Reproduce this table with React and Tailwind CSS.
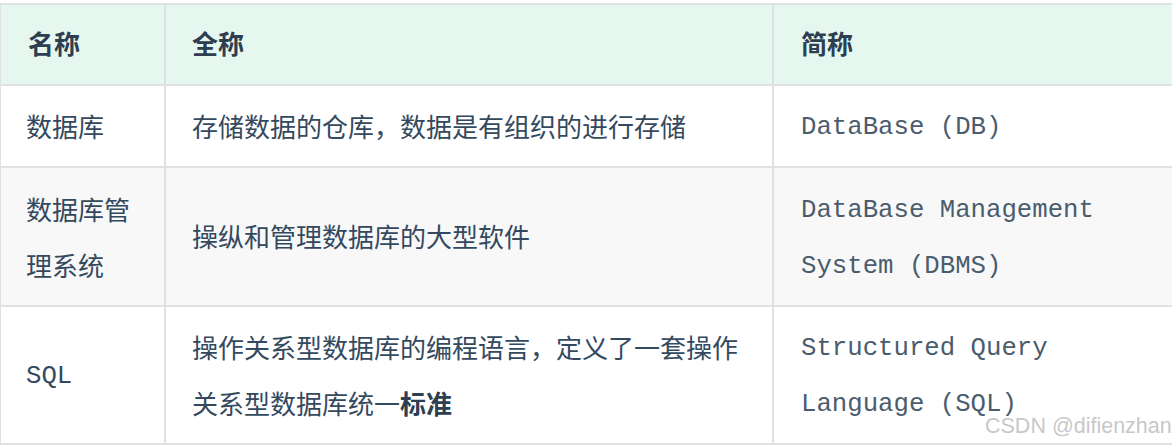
const rows = [
  {
    name: ["数据库"],
    full: [<>存储数据的仓库，数据是有组织的进行存储</>],
    abbr: ["DataBase (DB)"],
    bg: "bg-white",
    h: "h-[80px]",
  },
  {
    name: ["数据库管", "理系统"],
    full: [<>操纵和管理数据库的大型软件</>],
    abbr: ["DataBase Management", "System (DBMS)"],
    bg: "bg-[#f8f8f8]",
    h: "h-[137px]",
  },
  {
    name: ["SQL"],
    mono: true,
    full: [
      <>操作关系型数据库的编程语言，定义了一套操作</>,
      <>
        关系型数据库统一<strong className="font-bold text-[#2c3e50]">标准</strong>
      </>,
    ],
    abbr: ["Structured Query", "Language (SQL)"],
    bg: "bg-white",
    h: "h-[136px]",
  },
];

const cjk = "font-['Noto_Sans_CJK_SC','Noto_Sans',sans-serif]";
const mono = "font-['Liberation_Mono',monospace]";

function Lines({ items }) {
  return items.map((t, i) => <div key={i}>{t}</div>);
}

export default function App() {
  return (
    <div className="relative w-full h-[447px] overflow-hidden bg-white">
      <div className="ml-[-1px] mt-[3px] w-[1210px] bg-[#dfe2e5] p-[2px] grid grid-cols-[163px_606px_1fr] gap-[2px]">
        {/* header */}
        <div className={`h-[79px] bg-[#e6f7f0] flex items-center pb-[4px] pl-[27px] text-[26px] font-bold text-[#2c3e50] ${cjk}`}>
          名称
        </div>
        <div className={`h-[79px] bg-[#e6f7f0] flex items-center pb-[4px] pl-[26px] text-[26px] font-bold text-[#2c3e50] ${cjk}`}>
          全称
        </div>
        <div className={`h-[79px] bg-[#e6f7f0] flex items-center pb-[4px] pl-[27px] text-[26px] font-bold text-[#2c3e50] ${cjk}`}>
          简称
        </div>

        {rows.map((r, i) => (
          <div key={i} className="contents">
            <div
              className={`${r.bg} ${r.h} flex flex-col justify-center pl-[25px] leading-[56px] text-[#34495e] ${
                r.mono ? `${mono} pt-[4px] text-[25.7px] text-[#4a5c6e]` : `${cjk} text-[26px]`
              }`}
            >
              <Lines items={r.name} />
            </div>
            <div className={`${r.bg} ${r.h} flex flex-col justify-center pb-[1px] pl-[26px] leading-[56px] text-[26px] text-[#34495e] ${cjk}`}>
              <Lines items={r.full} />
            </div>
            <div className={`${r.bg} ${r.h} flex flex-col justify-center pt-[4px] pl-[27px] leading-[56px] text-[25.7px] text-[#4a5c6e] ${mono}`}>
              <Lines items={r.abbr} />
            </div>
          </div>
        ))}
      </div>

      {/* watermark */}
      <div className="absolute left-[985px] top-[415px] text-[21.5px] leading-[22px] text-[#c8c8c8] whitespace-nowrap font-['Liberation_Sans',Arial,sans-serif]">
        CSDN @difienzhan
      </div>
    </div>
  );
}
